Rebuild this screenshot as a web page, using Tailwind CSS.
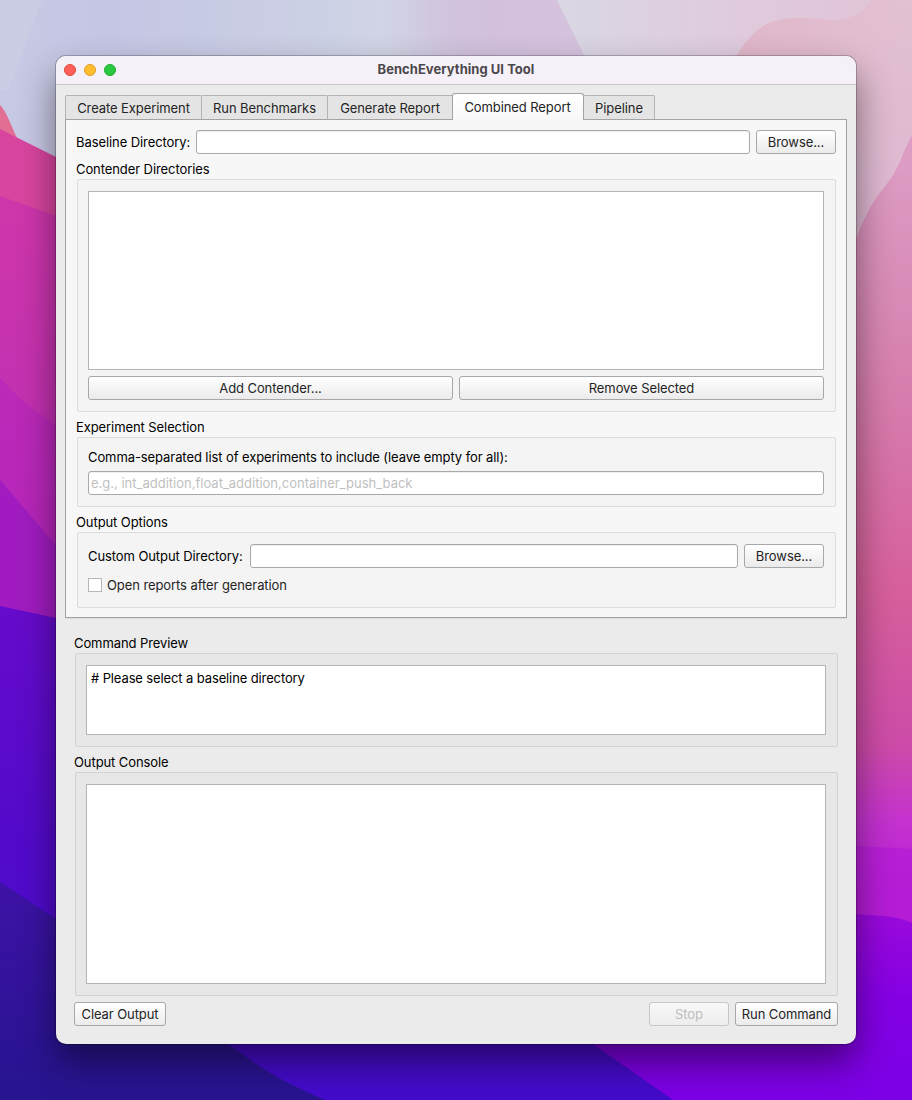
<!DOCTYPE html>
<html lang="en">
<head>
<meta charset="utf-8">
<title>BenchEverything UI Tool</title>
<script src="https://cdn.jsdelivr.net/npm/@tailwindcss/browser@4"></script>
</head>
<body class="relative h-[1100px] w-[912px] overflow-hidden font-['Inter',sans-serif] text-[13px] leading-4 tracking-[-0.085px] text-black">
<!-- Desktop wallpaper -->
<svg class="absolute inset-0" width="912" height="1100" viewBox="0 0 912 1100" aria-hidden="true">
  <defs>
    <linearGradient id="sky"><stop offset="0" stop-color="#c8c9e4"/><stop offset=".12" stop-color="#c5c6e4"/><stop offset=".24" stop-color="#c8cbe4"/><stop offset=".42" stop-color="#d0d4e5"/><stop offset=".5" stop-color="#d0c6de"/><stop offset=".6" stop-color="#d6c4e0"/></linearGradient>
    <linearGradient id="mauve"><stop offset="0" stop-color="#d2bfdc" stop-opacity="0"/><stop offset=".45" stop-color="#d2bfdc"/><stop offset="1" stop-color="#d6c2de"/></linearGradient>
    <linearGradient id="pale"><stop offset="0" stop-color="#dad7e3"/><stop offset=".5" stop-color="#dfcbdd"/><stop offset="1" stop-color="#e1c2d5"/></linearGradient>
    <linearGradient id="rose" x1="0" y1="0" x2="0" y2="1"><stop offset="0" stop-color="#e2c1d2"/><stop offset="1" stop-color="#dcb3cf"/></linearGradient>
    <linearGradient id="blush"><stop offset="0" stop-color="#dfadc0" stop-opacity=".6"/><stop offset="1" stop-color="#dfb4c5" stop-opacity="0"/></linearGradient>
    <linearGradient id="right" gradientUnits="userSpaceOnUse" x1="0" y1="130" x2="0" y2="900"><stop offset="0" stop-color="#dda0c6"/><stop offset=".3" stop-color="#d782b0"/><stop offset=".6" stop-color="#d65f9b"/><stop offset=".8" stop-color="#cd4ba8"/><stop offset=".9" stop-color="#c331cf"/><stop offset="1" stop-color="#b51ed6"/></linearGradient>
    <linearGradient id="left" gradientUnits="userSpaceOnUse" x1="0" y1="190" x2="0" y2="610"><stop offset="0" stop-color="#cf36ab"/><stop offset=".5" stop-color="#c331b0"/><stop offset="1" stop-color="#a81cc0"/></linearGradient>
    <linearGradient id="purple" x1="0" y1="0" x2="0" y2="1"><stop offset="0" stop-color="#9d0bd9"/><stop offset=".5" stop-color="#8400e4"/><stop offset="1" stop-color="#7c00e6"/></linearGradient>
    <linearGradient id="violet" x1="0" y1="0" x2="0" y2="1"><stop offset="0" stop-color="#660bcb"/><stop offset=".5" stop-color="#520aca"/><stop offset="1" stop-color="#430bcb"/></linearGradient>
    <linearGradient id="navy" x1="0" y1="0" x2="0" y2="1"><stop offset="0" stop-color="#3d12a6"/><stop offset="1" stop-color="#27148f"/></linearGradient>
  </defs>
  <rect width="912" height="1100" fill="url(#sky)"/>
  <path d="M0 0H42L8 90H0Z" fill="#cccee4" opacity=".8"/>
  <path d="M400 0H558L608 100H400Z" fill="url(#mauve)" opacity=".7"/>
  <path d="M557 0H912V300H700L605 98Z" fill="url(#pale)"/>
  <path d="M700 130L737 55C757 23 773 18 800 18C835 18 850 28 871 0H912V300H700Z" fill="url(#rose)"/>
  <path d="M700 130L737 55C757 23 773 18 800 18C835 18 850 28 871 0H912V140Z" fill="url(#blush)"/>
  <path d="M840 290C860 220 870 205 886 185C900 168 902 153 912 135V950H840Z" fill="url(#right)"/>
  <path d="M840 845L912 849V940H840Z" fill="#b41bd5" opacity=".7"/>
  <path d="M500 900L840 912C870 917 890 913 912 923V1100H500Z" fill="url(#purple)"/>
  <path d="M0 105C7 112 11 126 18 140H0Z" fill="#e36e94"/>
  <path d="M0 129L60 159V650H0Z" fill="#d8459f"/>
  <path d="M0 196L60 217V650H0Z" fill="url(#left)"/>
  <path d="M0 377C18 400 40 415 60 427V650H0Z" fill="#b727ba" opacity=".75"/>
  <path d="M0 480L60 550V650H0Z" fill="#9c1bc1" opacity=".85"/>
  <path d="M0 606L70 621L593 1044L673 1100H0Z" fill="url(#violet)"/>
  <path d="M0 882L60 922L228 1044C270 1075 285 1082 325 1100H0Z" fill="url(#navy)"/>
</svg>

<main class="relative mt-14 ml-14 flex h-[988px] w-[800px] flex-col overflow-visible rounded-[10px] bg-[#ebebeb] shadow-[0_0_0_1px_rgba(0,0,0,0.22),0_18px_36px_rgba(0,0,0,0.48)]">
  <header class="relative flex h-[29px] shrink-0 items-center rounded-t-[10px] border-b border-[#c9c6ca] bg-[#f6f1f8] pl-2">
    <div class="flex gap-2">
      <span class="size-3 rounded-full border border-[#e24640] bg-[#ff5f57]"></span>
      <span class="size-3 rounded-full border border-[#dfa023] bg-[#febc2e]"></span>
      <span class="size-3 rounded-full border border-[#1dad2b] bg-[#28c840]"></span>
    </div>
    <h1 class="absolute inset-x-0 top-[5px] text-center text-[13px] font-bold tracking-[0.03px] text-[#4b484c]">BenchEverything UI Tool</h1>
  </header>

  <nav class="relative z-10 mt-2 -mb-px ml-[9px] flex h-[27px] items-end text-[#242424]">
    <div class="flex h-[25px] w-[137px] items-center justify-center rounded-t-[2px] border border-[#b4b4b4] border-b-[#a3a3a3] bg-[#e4e4e4] pt-px">Create Experiment</div>
    <div class="-ml-px flex h-[25px] w-[127px] items-center justify-center rounded-t-[2px] border border-[#b4b4b4] border-b-[#a3a3a3] bg-[#e4e4e4] pt-px">Run Benchmarks</div>
    <div class="-ml-px flex h-[25px] w-[127px] items-center justify-center rounded-t-[2px] border border-[#b4b4b4] border-b-[#a3a3a3] bg-[#e4e4e4] pt-px pr-px">Generate Report</div>
    <div class="z-10 -ml-[2px] flex h-[27px] w-[132px] items-center justify-center rounded-t-[3px] border border-b-0 border-[#a3a3a3] bg-linear-to-b from-white to-[#f8f8f8] pr-px">Combined Report</div>
    <div class="-ml-px flex h-[25px] w-[72px] items-center justify-center rounded-t-[2px] border border-[#b4b4b4] border-b-[#a3a3a3] bg-[#e4e4e4] pt-px">Pipeline</div>
  </nav>

  <section class="mx-[9px] flex h-[499px] shrink-0 flex-col border border-[#a3a3a3] bg-[#f7f7f7] px-[10px] pt-[10px] shadow-[0_1px_0_#dcdcdc]">
    <div class="flex h-6 items-center">
      <label class="w-[120px]">Baseline Directory:</label>
      <div class="h-6 w-[554px] rounded-[3px] border border-[#a8a8a8] bg-white shadow-[inset_0_1px_0_#eeeeee]"></div>
      <button class="ml-[6px] h-6 w-20 rounded-[3px] border border-[#a8a8a8] bg-linear-to-b from-white to-[#ebebeb] text-[#242424]">Browse...</button>
    </div>

    <h2 class="mt-[7px] h-[18px]">Contender Directories</h2>
    <div class="ml-px flex h-[233px] flex-col rounded-[2px] border border-[#dcdcdc] bg-[#f4f4f4] px-[10px] pt-[11px]">
      <div class="h-[179px] w-[736px] border border-[#b4b4b4] bg-white"></div>
      <div class="mt-[6px] flex w-[736px] gap-[6px] text-[#242424]">
        <button class="h-6 w-[365px] rounded-[3px] border border-[#a8a8a8] bg-linear-to-b from-white to-[#ebebeb]">Add Contender...</button>
        <button class="h-6 w-[365px] rounded-[3px] border border-[#a8a8a8] bg-linear-to-b from-white to-[#ebebeb]">Remove Selected</button>
      </div>
    </div>

    <h2 class="mt-[7px] h-[18px]">Experiment Selection</h2>
    <div class="ml-px flex h-[70px] flex-col rounded-[2px] border border-[#dcdcdc] bg-[#f4f4f4] px-[10px] pt-[11px]">
      <label class="h-[22px]">Comma-separated list of experiments to include (leave empty for all):</label>
      <div class="flex h-6 w-[736px] items-center rounded-[3px] border border-[#a8a8a8] bg-white pl-[2px] tracking-normal text-[#bfbfbf] shadow-[inset_0_1px_0_#eeeeee]">e.g., int_addition,float_addition,container_push_back</div>
    </div>

    <h2 class="mt-[7px] h-[18px]">Output Options</h2>
    <div class="ml-px flex h-[76px] flex-col rounded-[2px] border border-[#dcdcdc] bg-[#f4f4f4] px-[10px] pt-[11px]">
      <div class="flex w-[736px] items-center">
        <label class="w-[162px]">Custom Output Directory:</label>
        <div class="h-6 w-[488px] rounded-[3px] border border-[#a8a8a8] bg-white shadow-[inset_0_1px_0_#eeeeee]"></div>
        <button class="ml-[6px] h-6 w-20 rounded-[3px] border border-[#a8a8a8] bg-linear-to-b from-white to-[#ebebeb] text-[#242424]">Browse...</button>
      </div>
      <div class="mt-[9px] flex items-center gap-[5px] text-[#242424]">
        <span class="size-[14px] border border-[#b6b6b6] bg-white"></span>
        <span>Open reports after generation</span>
      </div>
    </div>
  </section>

  <section class="mt-[17px] px-[18px]">
    <h2 class="h-[18px]">Command Preview</h2>
    <div class="ml-px h-[94px] rounded-[2px] border border-[#d2d2d2] bg-[#e7e7e7] px-[10px] pt-[11px]">
      <div class="h-[70px] w-[740px] border border-[#b4b4b4] bg-white px-1 pt-1 tracking-[-0.12px]">
        <span># Please select a baseline directory</span>
      </div>
    </div>
    <h2 class="mt-[7px] h-[18px]">Output Console</h2>
    <div class="ml-px h-[224px] rounded-[2px] border border-[#d2d2d2] bg-[#e7e7e7] px-[10px] pt-[11px]">
      <div class="h-[200px] w-[740px] border border-[#b4b4b4] bg-white"></div>
    </div>
    <div class="mt-[6px] flex text-[#242424]">
      <button class="h-6 w-[92px] rounded-[3px] border border-[#a8a8a8] bg-linear-to-b from-white to-[#ebebeb]">Clear Output</button>
      <button class="ml-auto h-6 w-20 rounded-[3px] border border-[#c6c6c6] bg-linear-to-b from-[#f8f8f8] to-[#ededed] text-[#bdbdbd]">Stop</button>
      <button class="ml-[6px] h-6 w-[103px] rounded-[3px] border border-[#a8a8a8] bg-linear-to-b from-white to-[#ebebeb]">Run Command</button>
    </div>
  </section>
</main>
</body>
</html>
